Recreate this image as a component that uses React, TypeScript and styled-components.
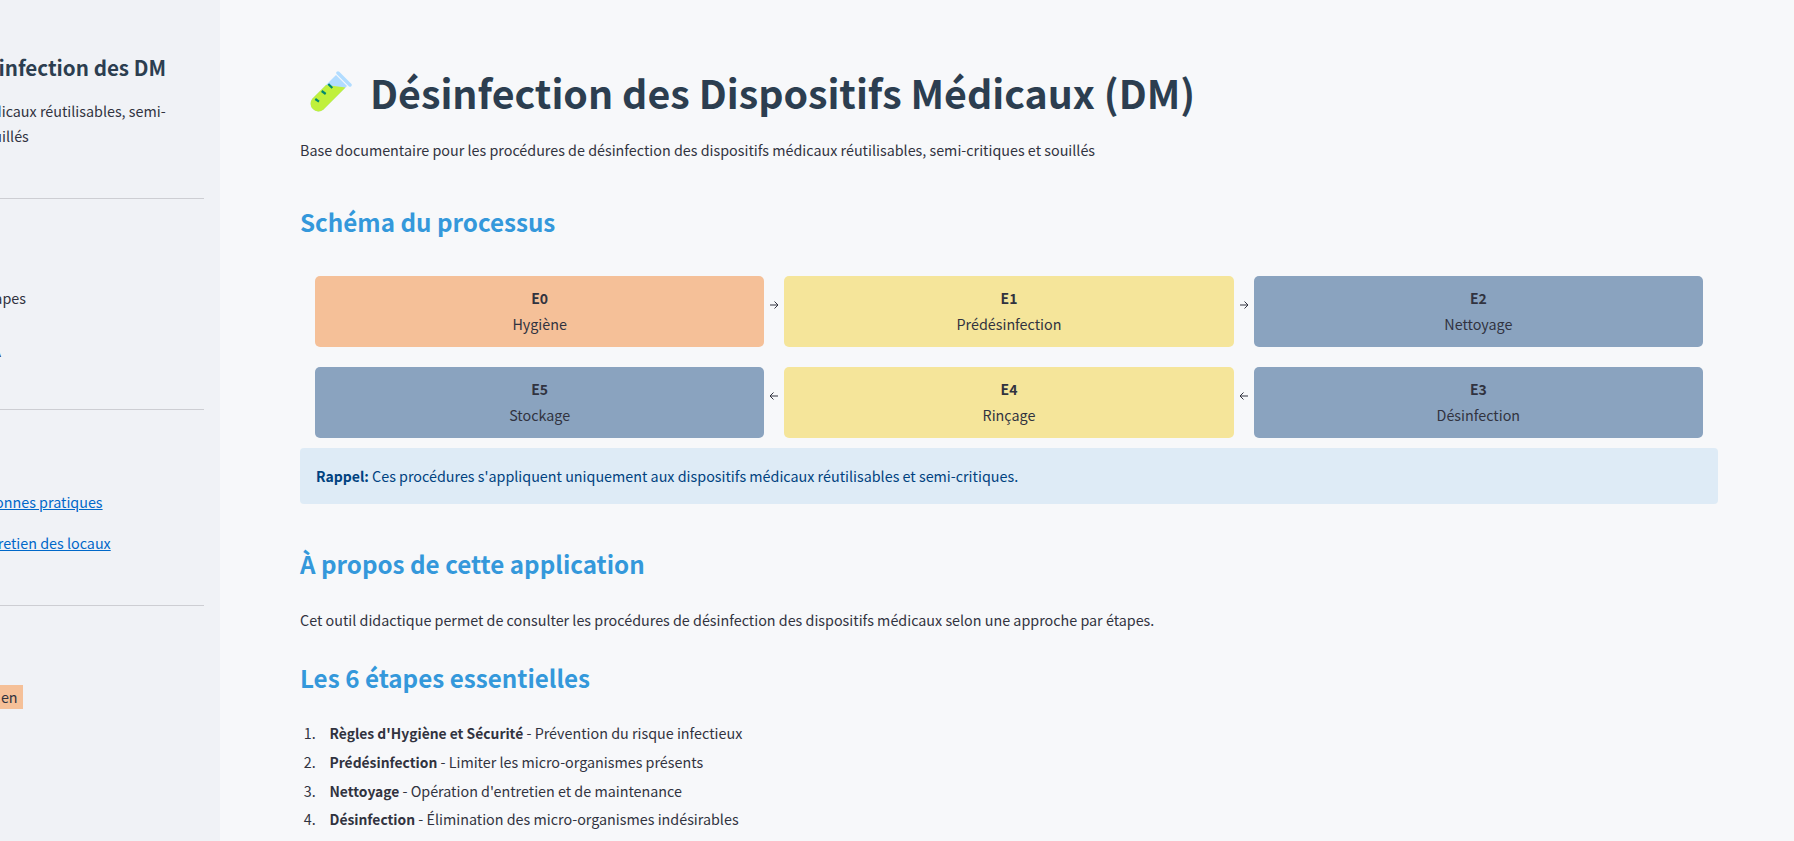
import React from "react";
import styled, { createGlobalStyle } from "styled-components";

const GlobalStyle = createGlobalStyle`
  html, body {
    margin: 0;
    height: 100%;
    overflow: hidden;
    background: #f7f8fa;
  }
  #root {
    height: 100%;
  }
`;

const Page = styled.div`
  display: flex;
  height: 841px;
  overflow: hidden;
  font-family: "Noto Sans CJK SC", "Source Sans Pro", "Noto Sans", sans-serif;
  font-size: 14.33px;
  line-height: 1.6;
  color: #31333f;
`;

const Sidebar = styled.aside`
  flex: 0 0 220px;
  overflow: hidden;
  background: #f0f2f6;
`;

// the sidebar is scrolled sideways in the picture, so its text starts off-canvas
const SidebarInner = styled.div`
  width: 304px;
  margin-left: -100px;
  padding-top: 51px;
`;

const SidebarTitle = styled.h2`
  margin: 0 0 16px;
  font-size: 20.6px;
  font-weight: 700;
  line-height: 32px;
  color: #2c3e50;
  white-space: nowrap;
  text-align: right;
  padding-right: 38px;
`;

const SidebarText = styled.p`
  margin: 0;
  line-height: 24.6px;
`;

const Divider = styled.hr<{ $top: number }>`
  margin: ${(p) => p.$top}px 0 0;
  border: 0;
  border-top: 1px solid #cdced3;
`;

const SidebarItem = styled.p<{ $top: number }>`
  margin: ${(p) => p.$top}px 0 0;
  line-height: 22px;
`;

const SidebarLink = styled.a`
  color: #0068c9;
  text-decoration: underline;
`;

const Tag = styled.span`
  display: inline-block;
  background: #f5c098;
  padding: 0 5px;
  line-height: 24px;
`;

const Main = styled.main`
  flex: 1;
  overflow: hidden;
  padding: 58px 76px 0 80px;
`;

const Title = styled.h1`
  display: flex;
  align-items: center;
  gap: 18px;
  margin: 0 0 12px;
  font-size: 39.35px;
  font-weight: 700;
  line-height: 68px;
  color: #2c3e50;
`;

const TubeIcon = styled.svg`
  flex: none;
  margin-left: 10px;
`;

const Lead = styled.p`
  margin: 0 0 40px;
  line-height: 24px;
`;

const Heading = styled.h2<{ $before?: number; $after: number }>`
  margin: ${(p) => p.$before ?? 0}px 0 ${(p) => p.$after}px;
  font-size: 24.2px;
  font-weight: 600;
  line-height: 40px;
  color: #3498db;
`;

const Flow = styled.div`
  display: flex;
  flex-direction: column;
  gap: 20px;
  padding: 0 15px;
`;

const FlowRow = styled.div`
  display: grid;
  grid-template-columns: 1fr 20px 1fr 20px 1fr;
  align-items: center;
`;

const stepColors = {
  orange: "#f5c098",
  yellow: "#f5e59a",
  blue: "#8aa3bf",
};

const Step = styled.div<{ $tone: keyof typeof stepColors }>`
  height: 71px;
  padding-top: 10px;
  box-sizing: border-box;
  border-radius: 5px;
  background: ${(p) => stepColors[p.$tone]};
  text-align: center;
  line-height: 25px;
`;

const StepCode = styled.div`
  font-weight: 700;
  font-size: 14px;
`;

const Arrow = styled.span`
  display: flex;
  justify-content: center;
  margin-bottom: 14px;
  color: #31333f;
`;

const Callout = styled.div`
  margin-top: 10px;
  padding: 16px;
  height: 56px;
  box-sizing: border-box;
  border-radius: 4px;
  background: #deebf6;
  color: #004280;
  line-height: 24px;
`;

const CalloutLabel = styled.strong`
  font-size: 14px;
`;

const Paragraph = styled.p`
  margin: 0 0 26px;
  line-height: 24px;
`;

const Steps = styled.ol`
  margin: 0;
  padding-left: 19px;
`;

const StepItem = styled.li`
  line-height: 24px;
  margin-bottom: 4.8px;
  padding-left: 10.5px;
`;

const StepName = styled.strong`
  font-size: 13.85px;
`;

type Tone = keyof typeof stepColors;

const topRow: [string, string, Tone][] = [
  ["E0", "Hygiène", "orange"],
  ["E1", "Prédésinfection", "yellow"],
  ["E2", "Nettoyage", "blue"],
];

const bottomRow: [string, string, Tone][] = [
  ["E5", "Stockage", "blue"],
  ["E4", "Rinçage", "yellow"],
  ["E3", "Désinfection", "blue"],
];

const essentials = [
  ["Règles d'Hygiène et Sécurité", "Prévention du risque infectieux"],
  ["Prédésinfection", "Limiter les micro-organismes présents"],
  ["Nettoyage", "Opération d'entretien et de maintenance"],
  ["Désinfection", "Élimination des micro-organismes indésirables"],
  ["Rinçage", "Retirer les résidus de désinfectant"],
  ["Stockage", "Conservation à l'abri des contaminations"],
];

const TestTube = () => (
  <TubeIcon width="42" height="42" viewBox="0 0 42 42">
    <path d="M26 4l11 11-23.500 23.500a7.800 7.800 0 0 1-11-11z" fill="#b1dcff" />
    <path d="M28 2l12 12" stroke="#b1dcff" strokeWidth="3.500" strokeLinecap="round" />
    <path d="M16 14l19.500 2.500-22 22a7.800 7.800 0 0 1-11-11z" fill="#c0f03c" />
    <path d="M5.300 28l3.700 2.600M11.700 20l4 3M18.300 13l4 4" stroke="#00896f" strokeWidth="2.200" />
  </TubeIcon>
);

const ArrowRight = () => (
  <svg width="10" height="10" viewBox="0 0 10 10" fill="none" stroke="currentColor" strokeWidth="1">
    <path d="M1 5h8M5.500 1.500L9 5l-3.500 3.500" />
  </svg>
);

const ArrowLeft = () => (
  <svg width="10" height="10" viewBox="0 0 10 10" fill="none" stroke="currentColor" strokeWidth="1">
    <path d="M9 5H1M4.500 1.500L1 5l3.500 3.500" />
  </svg>
);

const FlowSteps: React.FC<{ steps: [string, string, Tone][]; back?: boolean }> = ({ steps, back }) => (
  <FlowRow>
    {steps.map(([code, label, tone], i) => (
      <React.Fragment key={code}>
        {i > 0 && <Arrow>{back ? <ArrowLeft /> : <ArrowRight />}</Arrow>}
        <Step $tone={tone}>
          <StepCode>{code}</StepCode>
          <div>{label}</div>
        </Step>
      </React.Fragment>
    ))}
  </FlowRow>
);

const App: React.FC = () => (
  <Page>
    <GlobalStyle />
    <Sidebar>
      <SidebarInner>
        <SidebarTitle>Désinfection des DM</SidebarTitle>
        <SidebarText>dispositifs médicaux réutilisables, semi-critiques et souillés</SidebarText>
        <Divider $top={50} />
        <SidebarItem $top={88}>Parcours en étapes</SidebarItem>
        <SidebarItem $top={31}>Procédures RIA</SidebarItem>
        <Divider $top={47} />
        <SidebarItem $top={81}>
          <SidebarLink href="#">Le guide des bonnes pratiques</SidebarLink>
        </SidebarItem>
        <SidebarItem $top={19}>
          <SidebarLink href="#">Le cahier d'entretien des locaux</SidebarLink>
        </SidebarItem>
        <Divider $top={51} />
        <SidebarItem $top={79}>
          <Tag>Version locale en</Tag>
        </SidebarItem>
      </SidebarInner>
    </Sidebar>
    <Main>
      <Title>
        <TestTube />
        Désinfection des Dispositifs Médicaux (DM)
      </Title>
      <Lead>
        Base documentaire pour les procédures de désinfection des dispositifs médicaux réutilisables,
        semi-critiques et souillés
      </Lead>
      <Heading $after={34}>Schéma du processus</Heading>
      <Flow>
        <FlowSteps steps={topRow} />
        <FlowSteps steps={bottomRow} back />
      </Flow>
      <Callout>
        <CalloutLabel>Rappel:</CalloutLabel> Ces procédures s'appliquent uniquement aux dispositifs médicaux
        réutilisables et semi-critiques.
      </Callout>
      <Heading $before={40} $after={24}>À propos de cette application</Heading>
      <Paragraph>
        Cet outil didactique permet de consulter les procédures de désinfection des dispositifs
        médicaux selon une approche par étapes.
      </Paragraph>
      <Heading $after={23}>Les 6 étapes essentielles</Heading>
      <Steps>
        {essentials.map(([name, text]) => (
          <StepItem key={name}>
            <StepName>{name}</StepName> - {text}
          </StepItem>
        ))}
      </Steps>
    </Main>
  </Page>
);

export default App;
